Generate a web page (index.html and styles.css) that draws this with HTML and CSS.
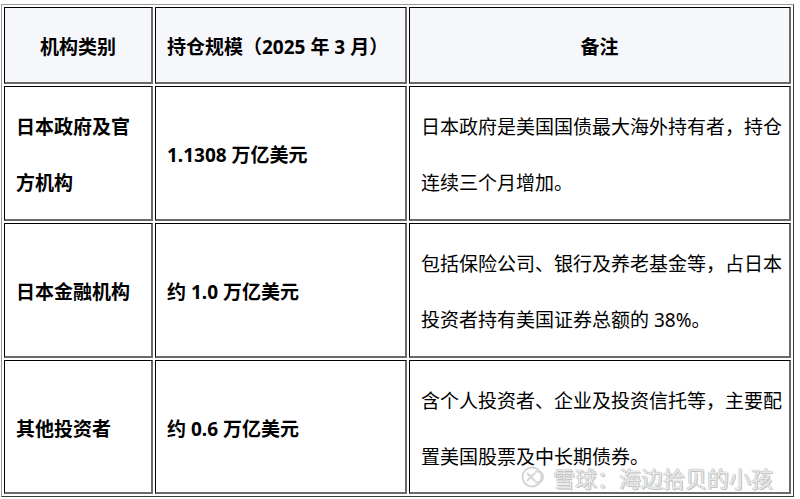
FILE: index.html
```html
<!DOCTYPE html>
<html lang="zh-CN">
<head>
<meta charset="utf-8">
<link rel="stylesheet" href="styles.css">
</head>
<body>
<div class="wrap">
<table class="grid">
  <colgroup>
    <col class="c1"><col class="c2"><col class="c3">
  </colgroup>
  <thead>
    <tr class="head">
      <th class="center">机构类别</th>
      <th>持仓规模（2025 年 3 月）</th>
      <th class="center">备注</th>
    </tr>
  </thead>
  <tbody>
    <tr class="r1">
      <td class="b">日本政府及官方机构</td>
      <td class="b">1.1308 万亿美元</td>
      <td>日本政府是美国国债最大海外持有者，持仓连续三个月增加。</td>
    </tr>
    <tr class="r2">
      <td class="b">日本金融机构</td>
      <td class="b">约 1.0 万亿美元</td>
      <td>包括保险公司、银行及养老基金等，占日本投资者持有美国证券总额的 38%。</td>
    </tr>
    <tr class="r3">
      <td class="b">其他投资者</td>
      <td class="b">约 0.6 万亿美元</td>
      <td>含个人投资者、企业及投资信托等，主要配置美国股票及中长期债券。</td>
    </tr>
  </tbody>
</table>
<div class="mark">
  <svg class="logo" width="26" height="22" viewBox="0 0 26 22">
    <circle cx="11" cy="11" r="9.5" fill="none" stroke="#d6d6d6" stroke-width="2"/>
    <path d="M6 7 L14 15 M14 7 L6 15" stroke="#d6d6d6" stroke-width="2.2" fill="none"/>
    <path d="M14 6 Q22 4 22 11 Q22 18 14 16" stroke="#d6d6d6" stroke-width="2" fill="none"/>
  </svg>
  <span class="mtext">雪球：海边拾贝的小孩</span>
</div>
</div>
</body>
</html>
```
FILE: styles.css
```css
html, body {
  margin: 0;
  padding: 0;
  background: #fff;
}
.wrap {
  position: relative;
  padding: 4px 0 0 1px;
}
.grid {
  box-sizing: border-box;
  width: 793px;
  table-layout: fixed;
  border-collapse: separate;
  border-spacing: 2px;
  border: 1px solid;
  border-color: #9a9a9a #3a3a3a #3a3a3a #9a9a9a;
  font-family: "Noto Sans", "Noto Sans CJK SC", sans-serif;
  font-size: 19px;
  color: #000;
}
.c1 { width: 149px; }
.c2 { width: 252px; }
.c3 { width: 382px; }
.grid th,
.grid td {
  box-sizing: border-box;
  padding: 4px 4px 0 11px;
  border-style: solid;
  border-width: 1px 2px 2px 1px;
  border-color: #000 #6a6a6a #6a6a6a #000;
  vertical-align: middle;
  text-align: left;
  line-height: 56px;
}
.grid th {
  background: #f6f7fb;
  font-weight: 700;
  height: 77px;
  line-height: 30px;
}
.grid th.center {
  text-align: center;
  padding-right: 11px;
}
.grid td.b { font-weight: 700; }
.r1 td, .r2 td { height: 135px; }
.r3 td { height: 134px; }
.mark {
  position: absolute;
  left: 521px;
  top: 462px;
  display: flex;
  align-items: center;
  gap: 6px;
  pointer-events: none;
}
.mtext {
  font-family: "Noto Sans CJK SC", sans-serif;
  font-size: 22px;
  line-height: 30px;
  color: rgba(255, 255, 255, 0.75);
  text-shadow: 0 0 1px #aaa, 0 0 1px #aaa, 1px 1px 0 rgba(150,150,150,0.5);
}
```
